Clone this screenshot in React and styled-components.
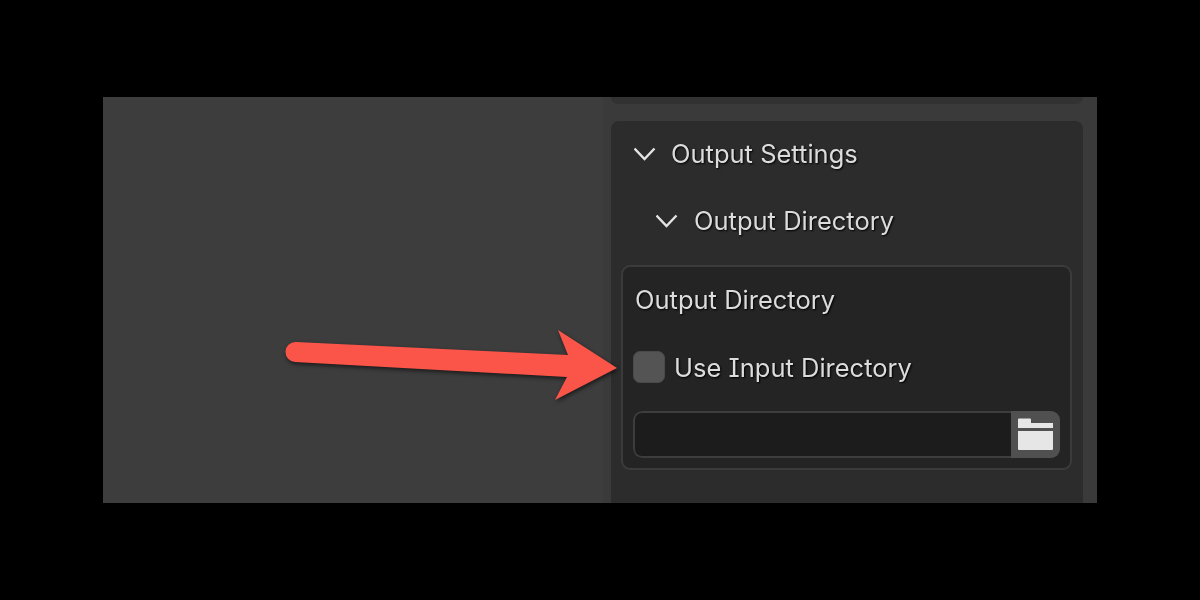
import React from 'react'
import styled, { createGlobalStyle } from 'styled-components'

const GlobalStyle = createGlobalStyle`
  html, body {
    margin: 0;
    padding: 0;
    height: 100%;
    background: #000;
  }
`;

const Page = styled.div`
  position: relative;
  width: 1200px;
  height: 600px;
  padding: 97px 103px;
  box-sizing: border-box;
  background: #000;
  overflow: hidden;
  font-family: Inter, "Noto Sans", sans-serif;
`;

const Window = styled.div`
  display: flex;
  height: 100%;
  overflow: hidden;
  background: #3d3d3d;
  filter: blur(0.45px);
`;

const Viewport = styled.div`
  flex: 1;
  background: #3d3d3d;
`;

const Sidebar = styled.div`
  width: 494px;
  padding: 0 14px 0 8px;
  box-sizing: border-box;
  display: flex;
  flex-direction: column;
  gap: 17px;
  background: #3a3a3a;
`;

const PanelEnd = styled.div`
  height: 7px;
  flex-shrink: 0;
  background: #323232;
  border-radius: 0 0 8px 8px;
`;

const Panel = styled.div`
  flex: 1;
  background: #2c2c2c;
  border-radius: 8px 8px 0 0;
  display: flex;
  flex-direction: column;
`;

const Header = styled.div`
  display: flex;
  align-items: center;
  height: ${({ $height }) => $height}px;
  padding-left: ${({ $indent }) => $indent}px;
  gap: ${({ $gap }) => $gap}px;
  flex-shrink: 0;
`;

const Label = styled.span`
  margin-top: ${({ $nudge }) => $nudge || -2}px;
  font-size: 25.5px;
  font-weight: 400;
  font-feature-settings: "cv08" 1;
  color: #dcdcdc;
  white-space: nowrap;
  text-shadow: 1px 1px 2px #000;
`;

const SubPanel = styled.div`
  margin: 10px 11px 0 10px;
  height: 205px;
  box-sizing: border-box;
  padding: 0 10px;
  background: #242424;
  border: 2px solid #3b3b3b;
  border-radius: 9px;
  display: flex;
  flex-direction: column;
`;

const FieldTitle = styled.div`
  height: 66px;
  display: flex;
  align-items: center;
  padding-left: 2px;
`;

const CheckRow = styled.div`
  height: 68px;
  display: flex;
  align-items: center;
  gap: 9px;
`;

const Checkbox = styled.div`
  width: 32px;
  height: 32px;
  box-sizing: border-box;
  background: #545454;
  border: 1px solid #4a4a4a;
  border-radius: 7px;
`;

const PathField = styled.div`
  margin-top: 10px;
  height: 47px;
  display: flex;
  border-radius: 9px;
  overflow: hidden;
`;

const PathInput = styled.div`
  flex: 1;
  box-sizing: border-box;
  background: #1c1c1c;
  border: 2px solid #3d3d3d;
  border-right: none;
  border-radius: 9px 0 0 9px;
`;

const BrowseButton = styled.div`
  width: 49px;
  background: #505050;
  display: flex;
  align-items: center;
  justify-content: center;
`;

const Arrow = styled.svg`
  position: absolute;
  left: 0;
  top: 0;
  filter: drop-shadow(1px 2px 2px rgba(0, 0, 0, 0.6));
`;

const Chevron = () => (
  <svg width="22" height="14" viewBox="0 0 22 14" fill="none">
    <path d="M0.5 1.5 L10.5 12 L20.5 1.5" stroke="#e4e4e4" strokeWidth="2.4" />
  </svg>
)

const FolderIcon = () => (
  <svg width="35" height="33" viewBox="0 0 35 33">
    <path d="M1 0.5 H12 Q13 0.5 13 1.5 V5 H35 V10 H0 V1.5 Q0 0.5 1 0.5 Z" fill="#e6e6e6" />
    <path d="M0 13 H35 V31 Q35 32 34 32 H1 Q0 32 0 31 Z" fill="#e6e6e6" />
  </svg>
)

const App = () => {
  return (
    <Page>
      <GlobalStyle />
      <Window>
        <Viewport />
        <Sidebar>
          <PanelEnd />
          <Panel>
            <Header $height={66} $indent={23} $gap={15}>
              <Chevron />
              <Label>Output Settings</Label>
            </Header>
            <Header $height={68} $indent={45} $gap={16}>
              <Chevron />
              <Label>Output Directory</Label>
            </Header>
            <SubPanel>
              <FieldTitle>
                <Label>Output Directory</Label>
              </FieldTitle>
              <CheckRow>
                <Checkbox />
                <Label $nudge={1}>Use Input Directory</Label>
              </CheckRow>
              <PathField>
                <PathInput />
                <BrowseButton>
                  <FolderIcon />
                </BrowseButton>
              </PathField>
            </SubPanel>
          </Panel>
        </Sidebar>
      </Window>
      <Arrow width="1200" height="600" viewBox="0 0 1200 600">
        <path
          d="M296 342 L568 355 L558 330 L617 368 L555 400 L567 377 L295 362 A10 10 0 0 1 296 342 Z"
          fill="#fb5549"
        />
      </Arrow>
    </Page>
  )
}

export default App
